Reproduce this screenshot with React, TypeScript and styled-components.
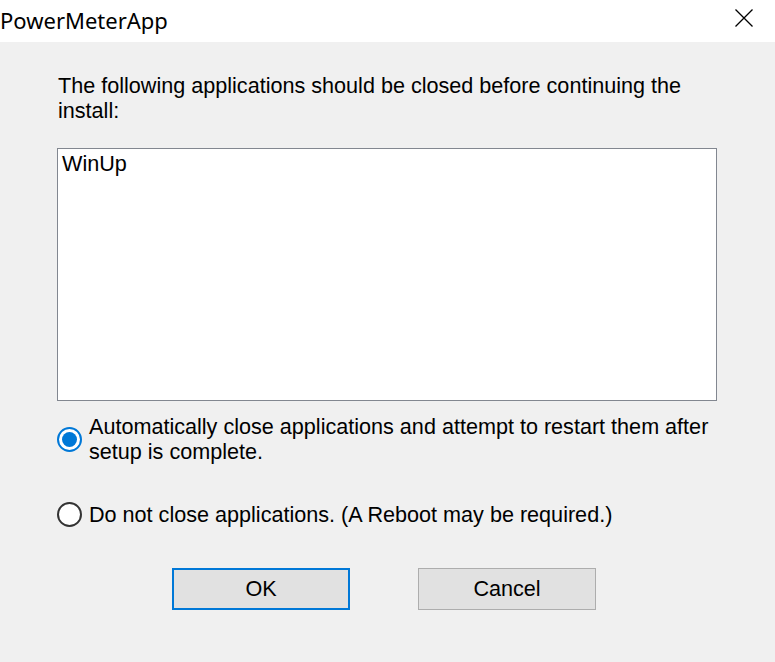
import React, { useState } from "react";
import styled, { createGlobalStyle } from "styled-components";

const Global = createGlobalStyle`
  html, body { margin: 0; padding: 0; background: #f0f0f0; }
  #root { width: 775px; height: 662px; }
  * { box-sizing: border-box; }
`;

const Window = styled.div`
  width: 775px;
  height: 662px;
  display: flex;
  flex-direction: column;
  background: #f0f0f0;
  font-family: "Liberation Sans", Arial, sans-serif;
  color: #000;
`;

const TitleBar = styled.div`
  height: 42px;
  background: #fff;
  display: flex;
  align-items: center;
  justify-content: space-between;
`;

const Title = styled.div`
  font-family: "Noto Sans", "Open Sans", sans-serif;
  font-size: 22px;
  color: #000;
  padding-bottom: 2px;
`;

const CloseButton = styled.button`
  width: 46px;
  height: 42px;
  border: none;
  background: transparent;
  display: flex;
  align-items: center;
  justify-content: center;
  margin-right: 8px;
  padding: 0 0 6px 0;
`;

const Body = styled.div`
  flex: 1;
  display: flex;
  flex-direction: column;
  padding: 31px 58px 0 57px;
  font-size: 21.6px;
  line-height: 25px;
`;

const Label = styled.div`
  padding-left: 1px;
`;

const ListBox = styled.div`
  margin-top: 25px;
  height: 253px;
  background: #fff;
  border: 1px solid #828790;
  padding: 2px 4px;
`;

const RadioRow = styled.label<{ $mt: number }>`
  display: flex;
  align-items: center;
  gap: 7px;
  margin-top: ${(p) => p.$mt}px;
  cursor: default;
`;

const RadioCircle = styled.span<{ $checked: boolean }>`
  flex: none;
  width: 25px;
  height: 25px;
  border-radius: 50%;
  border: 2px solid ${(p) => (p.$checked ? "#0078d7" : "#333")};
  background: #fff;
  display: flex;
  align-items: center;
  justify-content: center;
  &::after {
    content: "";
    width: 15px;
    height: 15px;
    border-radius: 50%;
    background: ${(p) => (p.$checked ? "#0078d7" : "transparent")};
  }
`;

const RadioText = styled.span`
  display: block;
`;

const ButtonRow = styled.div`
  display: flex;
  gap: 68px;
  margin-top: 41px;
  padding-left: 115px;
`;

const Button = styled.button<{ $default?: boolean }>`
  width: 178px;
  height: 42px;
  background: #e1e1e1;
  border: ${(p) => (p.$default ? "2px solid #0078d7" : "1px solid #adadad")};
  font-family: "Liberation Sans", Arial, sans-serif;
  font-size: 21.6px;
  color: #000;
  padding: 0 0 1px 0;
`;

export default function App() {
  const [choice, setChoice] = useState(0);
  return (
    <>
      <Global />
      <Window>
        <TitleBar>
          <Title>PowerMeterApp</Title>
          <CloseButton aria-label="Close">
            <svg width="18" height="18" viewBox="0 0 18 18">
              <path d="M0.5 0.5 L17.5 17.5 M17.5 0.5 L0.5 17.5" stroke="#000" strokeWidth="1.3" fill="none" />
            </svg>
          </CloseButton>
        </TitleBar>
        <Body>
          <Label>
            The following applications should be closed before continuing the
            <br />
            install:
          </Label>
          <ListBox>WinUp</ListBox>
          <RadioRow $mt={13} onClick={() => setChoice(0)}>
            <RadioCircle $checked={choice === 0} />
            <RadioText>
              Automatically close applications and attempt to restart them after
              <br />
              setup is complete.
            </RadioText>
          </RadioRow>
          <RadioRow $mt={38} onClick={() => setChoice(1)}>
            <RadioCircle $checked={choice === 1} />
            <RadioText>Do not close applications. (A Reboot may be required.)</RadioText>
          </RadioRow>
          <ButtonRow>
            <Button $default>OK</Button>
            <Button>Cancel</Button>
          </ButtonRow>
        </Body>
      </Window>
    </>
  );
}
